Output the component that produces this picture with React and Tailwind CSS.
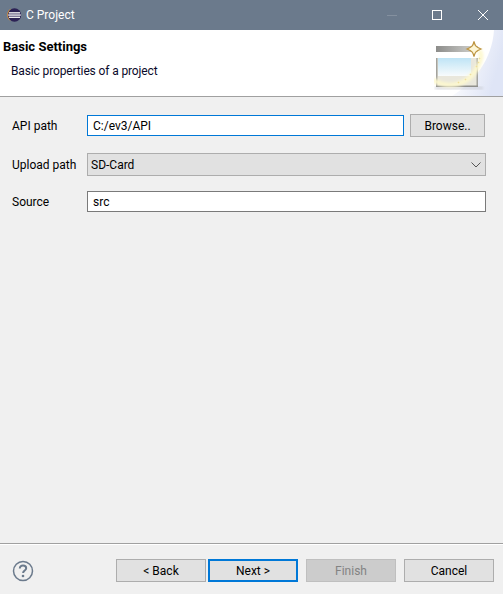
const font = { fontFamily: 'Roboto, "Noto Sans", sans-serif' };

const BannerIcon = () => (
  <svg width="69" height="66" viewBox="0 0 69 66" className="block shrink-0">
    <defs>
      <linearGradient id="wash" x1="0.2" y1="0" x2="1" y2="0.3">
        <stop offset="0" stopColor="#ffffff" />
        <stop offset="0.5" stopColor="#eef1fa" />
        <stop offset="1" stopColor="#dfe5f6" />
      </linearGradient>
      <linearGradient id="bar" x1="0" y1="0" x2="1" y2="0">
        <stop offset="0" stopColor="#8c8c8a" />
        <stop offset="1" stopColor="#d6d6d2" />
      </linearGradient>
      <linearGradient id="glass" x1="0" y1="0" x2="0" y2="1">
        <stop offset="0" stopColor="#bfe4f6" />
        <stop offset="1" stopColor="#f8fbfc" />
      </linearGradient>
      <filter id="soft" x="-20%" y="-20%" width="140%" height="140%">
        <feGaussianBlur stdDeviation="1.4" />
      </filter>
      <filter id="softer" x="-20%" y="-20%" width="140%" height="140%">
        <feGaussianBlur stdDeviation="0.5" />
      </filter>
    </defs>
    <path d="M60 0 C58 30 40 52 18 66 H69 V0 Z" fill="url(#wash)" filter="url(#softer)" />
    <rect x="1" y="57" width="48" height="2" fill="#c9ccd4" filter="url(#soft)" />
    <g filter="url(#softer)">
      <rect x="2" y="16" width="42" height="41" fill="#e9e7dc" />
      <rect x="2" y="16" width="42" height="6" fill="url(#bar)" />
      <rect x="2" y="22" width="42" height="6" fill="#ffffff" />
      <rect x="2" y="28" width="1.5" height="29" fill="#a3a39e" />
      <rect x="42.5" y="28" width="1.5" height="29" fill="#a3a39e" />
      <rect x="2" y="55.5" width="42" height="1.5" fill="#8f8f8b" />
      <rect x="4" y="28" width="33" height="18" fill="url(#glass)" />
    </g>
    <path d="M-1 50 C12 58 34 58 44 36 C48 28 48 24 45 20" fill="none" stroke="#fdf8cf" strokeWidth="4.5" filter="url(#soft)" />
    <path d="M36 44 l1 1 M42 36 l1 1 M31 49 l1 1 M24 52 l1 1 M45 28 l1 1 M44 32 l1 1" stroke="#efdf9a" strokeWidth="1.5" />
    <path d="M40 11.5 C41 16 42 17 47 19 C42 21 41 22 40 26.5 C39 22 38 21 33 19 C38 17 39 16 40 11.5 Z" fill="#fdf6d6" stroke="#bd9440" strokeWidth="1.2" />
  </svg>
);

const EclipseIcon = () => (
  <svg width="16" height="16" viewBox="0 0 16 16" className="block">
    <circle cx="8.5" cy="8" r="6.7" fill="#2c2255" />
    <path d="M5.5 1.6 A7 7 0 0 0 5.5 14.4 A7.6 7.6 0 0 1 5.5 1.6 Z" fill="#f7941e" />
    <rect x="3" y="5.2" width="11" height="1.3" fill="#ffffff" />
    <rect x="2.2" y="7.4" width="12.6" height="1.3" fill="#ffffff" />
    <rect x="3" y="9.6" width="11" height="1.3" fill="#ffffff" />
  </svg>
);

const Btn = ({ children, className = "border border-[#adadad] bg-[#e1e1e1] text-black" }) => (
  <button className={`h-[23px] w-[90px] text-[12px] leading-none ${className}`}>
    {children}
  </button>
);

export default function App() {
  return (
    <div className="flex h-[594px] w-[503px] flex-col overflow-hidden bg-[#f0f0f0] text-[12px] text-black" style={font}>
      <div className="flex h-[30px] items-center bg-[#6b7a8c] pl-[6px] text-white">
        <EclipseIcon />
        <span className="ml-[4px] text-[12px]">C Project</span>
        <div className="ml-auto flex items-center pr-[15px]">
          <svg width="10" height="10" viewBox="0 0 10 10" className="block">
            <path d="M0 5.5 H10" stroke="#84909f" strokeWidth="1" />
          </svg>
          <svg width="10" height="10" viewBox="0 0 10 10" className="ml-[35px] block">
            <rect x="0.5" y="0.5" width="9" height="9" fill="none" stroke="#ffffff" strokeWidth="1" />
          </svg>
          <svg width="10" height="10" viewBox="0 0 10 10" className="ml-[36px] block">
            <path d="M0 0 L10 10 M10 0 L0 10" stroke="#ffffff" strokeWidth="1" />
          </svg>
        </div>
      </div>

      <div className="flex h-[66px] justify-between bg-white">
        <div>
          <div className="mt-[8px] ml-[3px] text-[13px] leading-[18px] font-bold">Basic Settings</div>
          <div className="mt-[7px] ml-[11px] leading-[17px] tracking-[-0.13px] text-[#0a0a2a]">Basic properties of a project</div>
        </div>
        <BannerIcon />
      </div>
      <div className="h-[1px] bg-[#a0a0a0]" />

      <div className="flex flex-1 flex-col pt-[17px] pr-[17px] pl-[12px]">
        <div className="flex items-center">
          <span className="w-[75px]">API path</span>
          <input
            readOnly
            value="C:/ev3/API"
            className="h-[21px] w-[317px] border border-[#0078d7] bg-white pl-[5px] text-[12px] outline-none"
          />
          <button className="ml-[6px] h-[23px] w-[75px] border border-[#adadad] bg-[#e1e1e1] text-[12px] leading-none">Browse..</button>
        </div>
        <div className="mt-[16px] flex items-center">
          <span className="w-[75px]">Upload path</span>
          <div className="flex h-[23px] w-[399px] items-center justify-between border border-[#adadad] bg-[#e1e1e1] pr-[4px] pl-[3px]">
            <span>SD-Card</span>
            <svg width="10" height="6" viewBox="0 0 10 6" className="block">
              <path d="M0.5 0.5 L5 5 L9.5 0.5" fill="none" stroke="#555555" strokeWidth="1" />
            </svg>
          </div>
        </div>
        <div className="mt-[15px] flex items-center">
          <span className="w-[75px]">Source</span>
          <input
            readOnly
            value="src"
            className="h-[21px] w-[399px] border border-[#7a7a7a] bg-white pl-[5px] text-[12px] outline-none"
          />
        </div>
      </div>

      <div className="h-[1px] bg-[#a0a0a0]" />
      <div className="h-[1px] bg-white" />
      <div className="flex h-[49px] items-start pt-[14px] pr-[9px] pl-[12px]">
        <svg width="22" height="22" viewBox="0 0 22 22" className="mt-[1px] block">
          <circle cx="11" cy="11" r="9.5" fill="none" stroke="#6b7a8c" strokeWidth="1.5" />
          <path d="M7.8 8.6 C7.8 6.6 9.2 5.6 11 5.6 C12.9 5.6 14.2 6.7 14.2 8.3 C14.2 10.5 11.1 10.6 11.1 13" fill="none" stroke="#6b7a8c" strokeWidth="2" />
          <circle cx="11" cy="16" r="1.3" fill="#6b7a8c" />
        </svg>
        <div className="ml-auto flex">
          <Btn>&lt; Back</Btn>
          <div className="ml-[2px]">
            <Btn className="border-2 border-[#0078d7] bg-[#e1e1e1] text-black">Next &gt;</Btn>
          </div>
          <div className="ml-[8px]">
            <Btn className="border border-[#bfbfbf] bg-[#cccccc] text-[#838383]">Finish</Btn>
          </div>
          <div className="ml-[8px]">
            <Btn>Cancel</Btn>
          </div>
        </div>
      </div>
    </div>
  );
}
